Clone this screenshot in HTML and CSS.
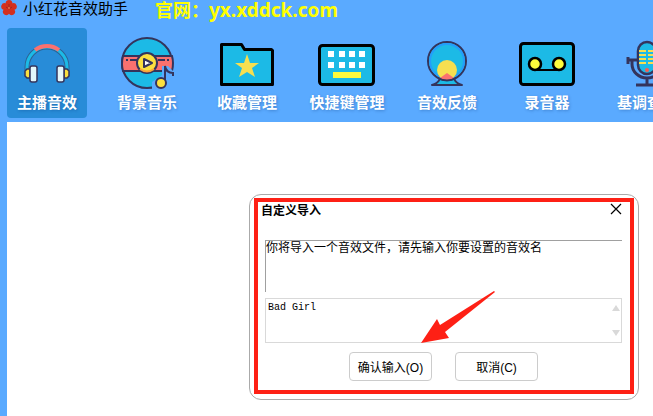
FILE: index.html
```
<!DOCTYPE html>
<html lang="zh-CN">
<head>
  <meta charset="UTF-8">
  <meta name="viewport" content="width=device-width, initial-scale=1">
  <title>小红花音效助手</title>
  <link rel="stylesheet" href="styles.css">
</head>
<body>
  <header class="titlebar">
    <svg class="logo" viewBox="0 0 16 16" width="16" height="16" aria-hidden="true">
      <g fill="#d3301f">
        <ellipse cx="8" cy="4" rx="3.500" ry="4"/>
        <ellipse cx="8" cy="4" rx="3.500" ry="4" transform="rotate(72 8 8)"/>
        <ellipse cx="8" cy="4" rx="3.500" ry="4" transform="rotate(144 8 8)"/>
        <ellipse cx="8" cy="4" rx="3.500" ry="4" transform="rotate(216 8 8)"/>
        <ellipse cx="8" cy="4" rx="3.500" ry="4" transform="rotate(288 8 8)"/>
        <circle cx="8" cy="8" r="4"/>
      </g>
      <path d="M8 4v5M5 7l3 2 3-2" stroke="#a32620" fill="none"/>
      <circle cx="8" cy="8" r="1" fill="#e8734a"/>
    </svg>
    <h1 class="app-name">小红花音效助手</h1>
    <p class="site">官网：<span class="site-url">yx.xddck.com</span></p>
  </header>

  <nav class="toolbar">
    <button class="tool active" type="button">
      <svg viewBox="0 0 80 64" width="80" height="64" aria-hidden="true">
        <path d="M20 42v-3a20 20 0 0 1 40 0v3" fill="none" stroke="#2d6293" stroke-width="5"/>
        <path d="M20 42v-3a20 20 0 0 1 40 0v3" fill="none" stroke="#1cbae6" stroke-width="3"/>
        <path d="M28 22a20 20 0 0 1 24 0" fill="none" stroke="#fa716f" stroke-width="4"/>
        <g stroke="#34345c" stroke-width="1.500">
          <path d="M23 41h-3l-2 2v5l2 2h3zM57 41h3l2 2v5l-2 2h-3z" fill="#fbe03f"/>
          <rect x="23" y="38" width="7" height="16" rx="2" fill="#e3f7fb"/>
          <rect x="50" y="38" width="7" height="16" rx="2" fill="#e3f7fb"/>
        </g>
      </svg>
      <span class="tool-label">主播音效</span>
    </button>
    <button class="tool" type="button">
      <svg viewBox="0 0 80 64" width="80" height="64" aria-hidden="true">
        <circle cx="40" cy="35" r="25" fill="#1cbae6" stroke="#34345c" stroke-width="2"/>
        <path d="M16 28h49q2 7 0 15H16q-2-7 0-15z" fill="#fa716f" stroke="#34345c" stroke-width="2"/>
        <path d="M19 32h2M23 32h7M51 32h7M60 32h2" stroke="#34345c" stroke-width="2"/>
        <circle cx="40" cy="35" r="10" fill="#fbe03f" stroke="#34345c" stroke-width="2"/>
        <path d="M33 41q7 5 14 0" fill="none" stroke="#f9a33a" stroke-width="2"/>
        <path d="M37 31l8 4-8 4z" fill="#fff" stroke="#34345c" stroke-width="2" stroke-linejoin="round"/>
        <path d="M45 64V54l10-7V38h6l5 5v21z" fill="#5aaaff"/>
        <path d="M58 55V38q1 7 8 7v3" fill="none" stroke="#34345c" stroke-width="2"/>
        <circle cx="54" cy="55" r="5" fill="#fbe03f" stroke="#34345c" stroke-width="2"/>
      </svg>
      <span class="tool-label">背景音乐</span>
    </button>
    <button class="tool" type="button">
      <svg viewBox="0 0 80 64" width="80" height="64" aria-hidden="true">
        <path d="M14.500 16.500h20l3 5h27l1 1v34h-51z" fill="#1cbae6" stroke="#000" stroke-width="3" stroke-linejoin="round"/>
        <path d="M40 26l3 9h9l-7 5 3 9-8-5-8 5 3-9-7-5h9z" fill="#f6df50"/>
      </svg>
      <span class="tool-label">收藏管理</span>
    </button>
    <button class="tool" type="button">
      <svg viewBox="0 0 80 64" width="80" height="64" aria-hidden="true">
        <rect x="12.500" y="17.500" width="54" height="39" rx="3" fill="#1cbae6" stroke="#000" stroke-width="3"/>
        <path d="M21 23h6v6h-6zM32 23h6v6h-6zM42 23h6v6h-6zM52 23h6v6h-6zM21 34h6v6h-6zM32 34h6v6h-6zM42 34h6v6h-6zM52 34h6v6h-6z" fill="#fff"/>
        <path d="M26 44h28v6H26z" fill="#fefb3c"/>
      </svg>
      <span class="tool-label">快捷键管理</span>
    </button>
    <button class="tool" type="button">
      <svg viewBox="0 0 80 64" width="80" height="64" aria-hidden="true">
        <path d="M25 57q5-1 8-6h14q3 5 8 6z" fill="#1cbae6" stroke="#34345c" stroke-width="2" stroke-linejoin="round"/>
        <circle cx="40" cy="33" r="19" fill="#1cbae6" stroke="#34345c" stroke-width="2"/>
        <circle cx="40" cy="33" r="17" fill="none" stroke="#249dfb" stroke-width="2"/>
        <circle cx="40" cy="42" r="10" fill="#f6df50"/>
        <path d="M33 50l7-5 7 5q-7 4-14 0z" fill="#fa716f"/>
        <path d="M31 50q9 5 18 0" fill="none" stroke="#34345c" stroke-width="2"/>
      </svg>
      <span class="tool-label">音效反馈</span>
    </button>
    <button class="tool" type="button">
      <svg viewBox="0 0 80 64" width="80" height="64" aria-hidden="true">
        <rect x="13.500" y="15.500" width="53" height="41" rx="3" fill="#1cbae6" stroke="#000" stroke-width="3"/>
        <path d="M28 42h24" stroke="#000" stroke-width="2"/>
        <circle cx="28" cy="36" r="6" fill="#fefb3c" stroke="#000" stroke-width="2.500"/>
        <circle cx="52" cy="36" r="6" fill="#fefb3c" stroke="#000" stroke-width="2.500"/>
      </svg>
      <span class="tool-label">录音器</span>
    </button>
    <button class="tool" type="button">
      <svg viewBox="0 0 80 64" width="80" height="64" aria-hidden="true">
        <path d="M25 32v4a15 14 0 0 0 30 0v-4M40 50v7" fill="none" stroke="#34345c" stroke-width="3"/>
        <path d="M29 57h22M21 29v7M22 32h8M59 29v7M50 32h8" stroke="#34345c" stroke-width="3"/>
        <rect x="31" y="14" width="18" height="32" rx="9" fill="#1cbae6" stroke="#34345c" stroke-width="2.500"/>
        <path d="M32 23h7M41 23h7M32 27h7M41 27h7M32 31h7M41 31h7M32 35h7M41 35h7" stroke="#f6df50" stroke-width="2"/>
        <circle cx="40" cy="42" r="2" fill="#fa5a50"/>
      </svg>
      <span class="tool-label">基调查询</span>
    </button>
  </nav>

  <main class="workspace">
    <form class="dialog" role="dialog" aria-labelledby="dialog-title">
      <div class="frame">
        <div class="dialog-head">
          <h2 class="dialog-title" id="dialog-title">自定义导入</h2>
          <button class="close" type="button" aria-label="关闭">
            <svg viewBox="0 0 12 12" width="12" height="12" aria-hidden="true">
              <path d="M1 1l10 10M11 1L1 11" stroke="#000" stroke-width="1.200"/>
            </svg>
          </button>
        </div>
        <label class="message" for="sound-name">你将导入一个音效文件，请先输入你要设置的音效名</label>
        <div class="field">
          <textarea class="name-input" id="sound-name">Bad Girl</textarea>
          <div class="scroll" aria-hidden="true">
            <span class="scroll-up"></span>
            <span class="scroll-down"></span>
          </div>
        </div>
        <div class="actions">
          <button class="btn" type="button">确认输入(O)</button>
          <button class="btn" type="button">取消(C)</button>
        </div>
      </div>
      <svg class="arrow" viewBox="0 0 74 52" width="74" height="52" aria-hidden="true">
        <path d="M0 52L16 28l3 6L73 0l1 1-50 40 4 6z" fill="#fe2015"/>
      </svg>
    </form>
  </main>
</body>
</html>
```
FILE: styles.css
```
* {
  box-sizing: border-box;
}

body {
  margin: 0;
  min-height: 100vh;
  display: flex;
  flex-direction: column;
  overflow: hidden;
  background: #5aaaff;
  color: #000;
  font-family: "Liberation Sans", "Noto Sans CJK SC", sans-serif;
}

h1, h2, p {
  margin: 0;
}

button {
  padding: 0;
  border: 0;
  background: none;
  color: inherit;
  font: inherit;
}

svg {
  display: block;
}

.titlebar {
  display: flex;
  height: 28px;
}

.logo {
  flex: none;
  margin: 0 6px 0 1px;
}

.app-name {
  width: 132px;
  font-size: 15px;
  font-weight: 400;
  line-height: 18px;
  white-space: nowrap;
}

.site {
  color: #ff0;
  font-family: "Noto Sans CJK SC", sans-serif;
  font-size: 18px;
  font-weight: 700;
  line-height: 18px;
  white-space: nowrap;
}

.site-url {
  font-family: "Noto Sans", "Open Sans", sans-serif;
  font-size: 19px;
}

/* 工具栏 */
.toolbar {
  display: flex;
  gap: 20px;
  padding-left: 7px;
}

.tool {
  flex: none;
  width: 80px;
  padding-bottom: 6px;
  border-radius: 4px;
  color: #fff;
  font-family: "Noto Sans CJK SC", sans-serif;
  font-size: 15px;
  font-weight: 700;
  line-height: 20px;
}

.tool.active {
  background: #288cd8;
}

.tool-label {
  display: flex;
  justify-content: center;
  white-space: nowrap;
  text-shadow: 1px 1px 3px rgba(0, 40, 100, 0.3);
}

.workspace {
  flex: 1;
  display: flex;
  justify-content: flex-end;
  align-items: flex-start;
  margin: 4px 0 0 7px;
  padding: 72px 14px 16px;
  background: #fff;
}

/* 导入弹窗 */
.dialog {
  position: relative;
  width: 390px;
  padding: 3px 4px 5px;
  border: 1px solid #aaa;
  border-radius: 12px;
  background: #fff;
  font-size: 12px;
}

.frame {
  padding: 0 8px 9px 7px;
  border: 4px solid #fe2015;
}

.dialog-head {
  display: flex;
  justify-content: space-between;
  height: 38px;
}

.dialog-title {
  margin-left: -4px;
  font-size: 12px;
  font-weight: 700;
  line-height: 18px;
}

.close {
  height: 14px;
}

.message {
  display: block;
  height: 52px;
  border-top: 1px solid #a0a0a0;
  border-left: 1px solid #a0a0a0;
  line-height: 14px;
}

.field {
  display: flex;
  height: 45px;
  margin-top: 6px;
  border: 1px solid #d9d9d9;
}

.name-input {
  flex: 1;
  padding: 2px;
  border: 0;
  outline: 0;
  resize: none;
  overflow: hidden;
  background: none;
  font-family: "Liberation Mono", "Noto Sans CJK SC", monospace;
  font-size: 10px;
  line-height: 14px;
}

.scroll {
  display: flex;
  flex-direction: column;
  justify-content: space-between;
  padding: 6px 1px;
}

.scroll-up,
.scroll-down {
  border: 4px solid transparent;
}

.scroll-up {
  border-top: 0;
  border-bottom: 6px solid #d9d9d9;
}

.scroll-down {
  border-bottom: 0;
  border-top: 6px solid #d9d9d9;
}

.actions {
  display: flex;
  justify-content: center;
  gap: 23px;
  margin-top: 9px;
}

.btn {
  width: 83px;
  height: 29px;
  border: 1px solid #ccc;
  border-radius: 4px;
  background: #fff;
}

/* 指向确认按钮的箭头，浮在输入框上方 */
.arrow {
  position: absolute;
  left: 171px;
  top: 96px;
  pointer-events: none;
}
```
